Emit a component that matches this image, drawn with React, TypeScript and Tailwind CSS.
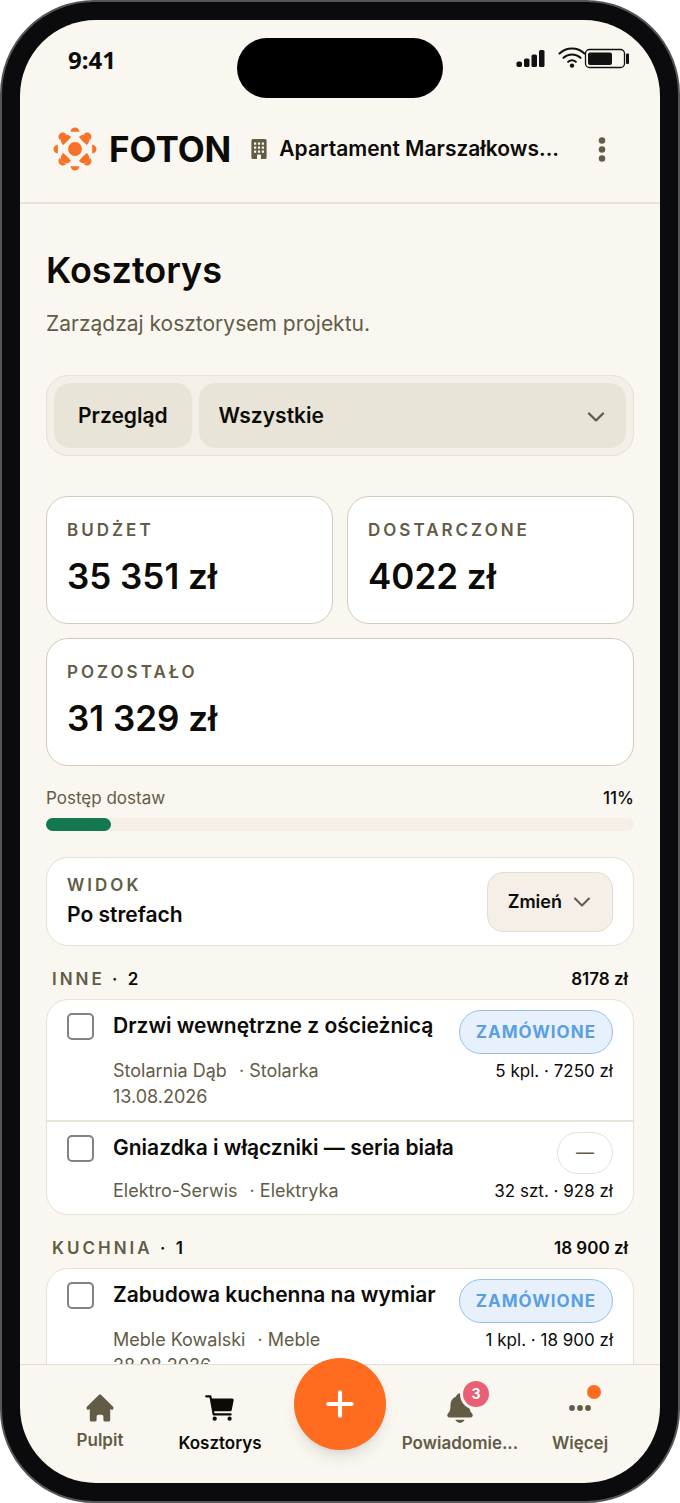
import React from 'react';
import { ChevronDown, Plus } from 'lucide-react';
import { HiHome } from 'react-icons/hi';
import { IoCart, IoNotifications } from 'react-icons/io5';

const stats = [
  { label: 'Budżet', value: '35 351 zł', wide: false },
  { label: 'Dostarczone', value: '4022 zł', wide: false },
  { label: 'Pozostało', value: '31 329 zł', wide: true },
];

const progress = 11;

const groups = [
  {
    name: 'Inne',
    total: '8178 zł',
    items: [
      {
        id: 'drzwi',
        title: 'Drzwi wewnętrzne z ościeżnicą',
        supplier: 'Stolarnia Dąb',
        category: 'Stolarka',
        date: '13.08.2026',
        status: 'Zamówione',
        amount: '5 kpl. · 7250 zł',
      },
      {
        id: 'gniazdka',
        title: 'Gniazdka i włączniki — seria biała',
        supplier: 'Elektro-Serwis',
        category: 'Elektryka',
        date: '',
        status: '',
        amount: '32 szt. · 928 zł',
      },
    ],
  },
  {
    name: 'Kuchnia',
    total: '18 900 zł',
    items: [
      {
        id: 'zabudowa',
        title: 'Zabudowa kuchenna na wymiar',
        supplier: 'Meble Kowalski',
        category: 'Meble',
        date: '28.08.2026',
        status: 'Zamówione',
        amount: '1 kpl. · 18 900 zł',
      },
    ],
  },
];

const Logo = () => (
  <svg viewBox="-22 -22 44 44" className="size-11 shrink-0" fill="#f97028" aria-hidden="true">
    <circle r="6.9" />
    {[0, 90, 180, 270].map((angle) => (
      <g key={angle} transform={`rotate(${angle})`}>
        <path d="M-4.6 -17.2C-4 -20 -2.2 -21.5 0 -21.5S4 -20 4.6 -17.2Z" />
        <g transform="rotate(45)">
          <path d="M-4.4 -16.6C-4.6 -19.6 -2.4 -21.4 0 -21.4S4.6 -19.6 4.4 -16.6Q0 -18.6 -4.4 -16.6Z" />
          <path d="M-5.6 -11.2C-5.6 -15 -3.4 -17.8 0 -17.8S5.6 -15 5.6 -11.2Q0 -10.4 -5.6 -11.2Z" />
        </g>
      </g>
    ))}
  </svg>
);

const BuildingIcon = () => (
  <svg viewBox="0 0 16 20" className="h-5 w-4 shrink-0" fill="#625c47" aria-hidden="true">
    <path
      fillRule="evenodd"
      d="M2 0h12a1.6 1.6 0 0 1 1.6 1.6V18.4A1.6 1.6 0 0 1 14 20H10V16.5a1 1 0 0 0-1-1H7a1 1 0 0 0-1 1V20H2A1.6 1.6 0 0 1 .4 18.4V1.6A1.6 1.6 0 0 1 2 0ZM3 3.5v2.2h2.2V3.5ZM6.9 3.5v2.2h2.2V3.5ZM10.8 3.5v2.2H13V3.5ZM3 7.5v2.2h2.2V7.5ZM6.9 7.5v2.2h2.2V7.5ZM10.8 7.5v2.2H13V7.5ZM3 11.5v2.2h2.2V11.5ZM6.9 11.5v2.2h2.2V11.5ZM10.8 11.5v2.2H13V11.5Z"
    />
  </svg>
);

const StatusIcons = () => (
  <svg viewBox="0 0 114 24" className="h-6 w-[114px]" fill="#111" aria-hidden="true">
    <rect x="0.5" y="14.5" width="5.5" height="5.5" rx="1.8" />
    <rect x="8" y="11.5" width="5.5" height="8.5" rx="1.6" />
    <rect x="15.5" y="7.5" width="5.5" height="12.5" rx="1.6" />
    <rect x="23" y="3" width="5.5" height="17" rx="1.6" />
    <g fill="none" stroke="#111" strokeWidth="2.1" strokeLinecap="round">
      <path d="M43.5 6.5a18 18 0 0 1 25 0" />
      <path d="M47.5 10.8a12.5 12.5 0 0 1 17 0" />
      <path d="M52.2 14.8a6 6 0 0 1 7.6 0" />
    </g>
    <circle cx="56" cy="18.6" r="2.2" />
    <rect x="69.5" y="2.5" width="39" height="18" rx="4" fill="none" stroke="#111" strokeWidth="1.3" />
    <rect x="72" y="5.5" width="24" height="12.5" rx="2" />
    <rect x="110" y="6.5" width="3" height="10.5" rx="1" />
  </svg>
);

const MoreIcon = ({ className }: { className: string }) => (
  <svg viewBox="0 0 24 8" className={className} fill="currentColor" aria-hidden="true">
    <circle cx="4" cy="4" r="2.9" />
    <circle cx="12" cy="4" r="2.9" />
    <circle cx="20" cy="4" r="2.9" />
  </svg>
);

const label = 'text-[17px] leading-6 font-semibold uppercase tracking-[3px] text-[#625c47]';
const navItem = 'flex flex-col items-center pt-[26px] text-[17px] leading-6 font-semibold whitespace-nowrap';

export default function App() {
  return (
    <div className="h-screen bg-white font-['Inter','Liberation_Sans',sans-serif] text-[#0c0b08]">
      <div className="h-full rounded-[94px] border-2 border-[#55565a] bg-[#0b0b0d] p-[18px]">
        <div className="flex h-full flex-col overflow-hidden rounded-[76px] bg-[#faf7f1]">
          <div className="grid h-[76px] shrink-0 grid-cols-3 items-start">
            <span className="pt-6 pl-12 font-['Noto_Sans',sans-serif] text-2xl leading-8 font-bold">9:41</span>
            <div className="mx-auto mt-[18px] h-[60px] w-[206px] rounded-full bg-black" />
            <div className="flex justify-end pt-[27px] pr-[30px]">
              <StatusIcons />
            </div>
          </div>

          <header className="flex h-[108px] shrink-0 items-center border-b-2 border-[#e9e4d9] pr-9 pl-[33px]">
            <a href="#" className="flex items-center gap-3">
              <Logo />
              <span className="text-[35px] leading-10 font-bold">FOTON</span>
            </a>
            <button type="button" className="ml-5 flex min-w-0 items-center gap-3 text-[21px] leading-8 font-semibold">
              <BuildingIcon />
              <span className="truncate">Apartament Marszałkows...</span>
            </button>
            <button type="button" aria-label="Menu" className="ml-auto flex h-10 w-11 shrink-0 items-center justify-center text-[#625c47]">
              <MoreIcon className="h-[9px] w-7 rotate-90" />
            </button>
          </header>

          <main className="min-h-0 flex-1 overflow-hidden px-[26px] pt-11">
            <h1 className="text-[36px] leading-11 font-semibold">Kosztorys</h1>
            <p className="mt-4 text-[21px] leading-8 text-[#625c47]">Zarządzaj kosztorysem projektu.</p>

            <div className="mt-[35px] flex gap-[7px] rounded-[22px] border border-[#e6e1d6] bg-[#f5f0e7] p-[7px]">
              <button type="button" className="h-[65px] rounded-2xl bg-[#e8e4d8] px-6 text-[21px] font-semibold">
                Przegląd
              </button>
              <div className="relative flex-1">
                <select
                  aria-label="Zakres"
                  className="h-[65px] w-full appearance-none rounded-2xl bg-[#e8e4d8] px-5 text-[21px] font-semibold"
                >
                  <option>Wszystkie</option>
                </select>
                <ChevronDown className="pointer-events-none absolute top-5 right-4 size-7 text-[#625c47]" />
              </div>
            </div>

            <section className="mt-10 grid grid-cols-2 gap-3.5">
              {stats.map((stat) => (
                <div
                  key={stat.label}
                  className={`h-32 rounded-[22px] border border-[#d3ccbe] bg-white px-5 pt-[21px] ${stat.wide ? 'col-span-2' : ''}`}
                >
                  <p className={label}>{stat.label}</p>
                  <p className="mt-3 text-[35px] leading-11 font-semibold">{stat.value}</p>
                </div>
              ))}
            </section>

            <div className="mt-5 flex justify-between text-[17px] leading-6">
              <span className="text-[#625c47]">Postęp dostaw</span>
              <span className="font-medium">{progress}%</span>
            </div>
            <div className="mt-2 h-[13px] rounded-full bg-[#f5efe7]">
              <div className="h-full rounded-full bg-[#14784f]" style={{ width: `${progress}%` }} />
            </div>

            <section className="mt-[26px] flex h-[89px] items-center justify-between rounded-[22px] border border-[#e6e0d5] bg-white px-5">
              <div>
                <p className={label}>Widok</p>
                <p className="mt-0.5 text-[21px] leading-8 font-semibold">Po strefach</p>
              </div>
              <button
                type="button"
                className="flex h-[60px] items-center gap-1.5 rounded-2xl border border-[#e3ddd2] bg-[#f5efe7] pr-4 pl-5 text-[18px] font-semibold"
              >
                Zmień
                <ChevronDown className="size-7 text-[#625c47]" strokeWidth={1.75} />
              </button>
            </section>

            {groups.map((group) => (
              <section key={group.name} className="mt-[21px]">
                <div className="flex justify-between px-1.5 text-[17px] leading-6 font-semibold">
                  <h2 className="tracking-[3px]">
                    <span className="text-[#625c47] uppercase">{group.name}</span> · {group.items.length}
                  </h2>
                  <span>{group.total}</span>
                </div>
                <ul className="mt-2 divide-y-2 divide-[#e9e4d9] rounded-[22px] border border-[#e6e0d5] bg-white">
                  {group.items.map((item) => (
                    <li key={item.id} className="flex items-start px-5 py-2.5">
                      <input
                        id={item.id}
                        type="checkbox"
                        className="mt-[3px] size-[27px] shrink-0 appearance-none rounded-[5px] border-2 border-[#84827d] bg-white"
                      />
                      <div className="ml-[19px] min-w-0 flex-1">
                        <div className="flex items-start justify-between">
                          <label htmlFor={item.id} className="text-[21px] leading-8 font-semibold whitespace-nowrap">
                            {item.title}
                          </label>
                          {item.status ? (
                            <span className="rounded-full border border-[#94c1f0] bg-[#e7f0fb] px-4 py-2 text-[17px] leading-[26px] font-bold tracking-[1px] text-[#5a9fe3] uppercase">
                              {item.status}
                            </span>
                          ) : (
                            <span className="rounded-full border border-[#e6e0d5] px-[18px] py-2 text-[18px] leading-6 text-[#625c47]">
                              —
                            </span>
                          )}
                        </div>
                        <div className="mt-1 flex justify-between leading-[26px]">
                          <div className="text-[18px] leading-[26px] text-[#625c47]">
                            <p>
                              <span className="mr-3">{item.supplier}</span>· {item.category}
                            </p>
                            {item.date && <p>{item.date}</p>}
                          </div>
                          <span className="text-[17px] leading-[26px]">{item.amount}</span>
                        </div>
                      </div>
                    </li>
                  ))}
                </ul>
              </section>
            ))}
          </main>

          <nav className="grid h-[119px] shrink-0 grid-cols-5 border-t border-[#e3ddd2] px-5 text-[#625c47]">
            <a href="#" className={navItem}>
              <HiHome className="size-[34px]" />
              <span className="mt-[3px]">Pulpit</span>
            </a>
            <a href="#" className={`${navItem} text-[#0c0b08]`}>
              <IoCart className="size-[34px]" />
              <span className="mt-1.5">Kosztorys</span>
            </a>
            <button
              type="button"
              aria-label="Dodaj"
              className="relative -mt-[7px] flex size-[92px] items-center justify-center justify-self-center rounded-full bg-[#ff6b1f] text-white shadow-lg"
            >
              <Plus className="size-10" strokeWidth={2.5} />
            </button>
            <a href="#" className={navItem}>
              <span className="relative">
                <IoNotifications className="size-[34px]" />
                <span className="absolute -top-2.5 left-5 flex size-[26px] items-center justify-center rounded-full bg-[#e96075] text-sm font-bold text-white ring-3 ring-[#faf7f1]">
                  3
                </span>
              </span>
              <span className="mt-1.5">Powiadomie...</span>
            </a>
            <a href="#" className={navItem}>
              <span className="relative flex size-[34px] items-center justify-center">
                <MoreIcon className="h-2 w-6" />
                <span className="absolute -top-1.5 -right-1 size-3.5 rounded-full bg-[#ff6b1f]" />
              </span>
              <span className="mt-1.5">Więcej</span>
            </a>
          </nav>
        </div>
      </div>
    </div>
  );
}
